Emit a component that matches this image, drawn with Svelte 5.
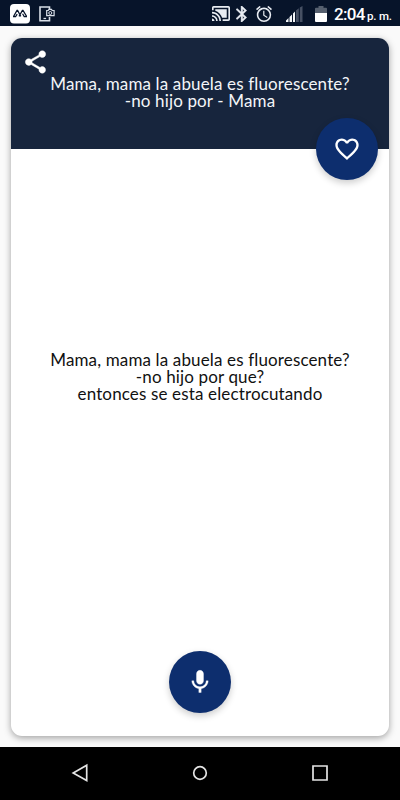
<script lang="ts">
  const title = ['Mama, mama la abuela es fluorescente?', '-no hijo por - Mama'];

  const joke = [
    'Mama, mama la abuela es fluorescente?',
    '-no hijo por que?',
    'entonces se esta electrocutando',
  ];

  let liked = $state(false);
</script>

<div class="screen">
  <header class="status-bar">
    <svg class="app-logo" width="20" height="20" viewBox="0 0 20 20">
      <rect width="20" height="19.5" rx="4" fill="#fff" />
      <path d="M3 12.6h2.6l1.6-2.4M3.6 12.4 7 6.4h.6l3.2 6M9 12.4l3.4-6h.6l3.6 6M17 12.6h-2.8l-1.6-2.8" fill="none" stroke="#07142a" stroke-width="1.2" />
    </svg>
    <svg class="capture" width="16" height="16" viewBox="0 0 16 16" fill="none" stroke="#d9dfe8">
      <path d="M10.5 3V1H1v13.8h9.5V11" stroke-width="1.6" />
      <path d="M4.5 12.5h2.6" stroke-width="1.3" />
      <path d="M7.7 4.5h1.5l.7-1.1h2.6l.7 1.1h1.9v5.2H7.7z" stroke-width="1.2" fill="#07142a" />
      <circle cx="11.3" cy="7" r="1.5" />
    </svg>

    <div class="system">
      <svg width="18" height="15" viewBox="1 3 22 18" preserveAspectRatio="none" fill="#e8ecf2">
        <path d="M1 18v3h3c0-1.66-1.34-3-3-3zm0-4v2c2.76 0 5 2.24 5 5h2c0-3.87-3.13-7-7-7zm18-7H5v1.63c3.96 1.28 7.09 4.41 8.37 8.37H19V7zM1 10v2c4.97 0 9 4.03 9 9h2c0-6.08-4.93-11-11-11zm20-7H3c-1.1 0-2 .9-2 2v3h2V5h18v14h-7v2h7c1.1 0 2-.9 2-2V5c0-1.1-.9-2-2-2z" />
      </svg>
      <svg class="bluetooth" width="11" height="16" viewBox="5 2 13 20" preserveAspectRatio="none" fill="#e8ecf2" stroke="#e8ecf2" stroke-width=".5">
        <path d="M17.71 7.71 12 2h-1v7.59L6.41 5 5 6.41 10.59 12 5 17.59 6.41 19 11 14.41V22h1l5.71-5.71-4.3-4.29 4.3-4.29zM13 5.83l1.88 1.88L13 9.59V5.83zm1.88 10.46L13 18.17v-3.76l1.88 1.88z" />
      </svg>
      <svg class="alarm" width="16" height="16" viewBox="2 2 20 20" fill="#e8ecf2">
        <path d="m22 5.72-4.6-3.86-1.29 1.53 4.6 3.86L22 5.72zM7.88 3.39 6.6 1.86 2 5.71l1.29 1.53 4.59-3.85zM12.5 8H11v6l4.75 2.85.75-1.23-4-2.37V8zM12 4c-4.97 0-9 4.03-9 9s4.02 9 9 9a9 9 0 0 0 0-18zm0 16c-3.87 0-7-3.13-7-7s3.13-7 7-7 7 3.13 7 7-3.13 7-7 7z" />
      </svg>
      <svg class="signal" width="17" height="16" viewBox="0 0 17 16">
        <path d="M0 16v-1.5L2.5 12v4zM3.5 16v-5L6 8.5V16zM7 16V7.5L9 5.5V16z" fill="#f4f6f8" />
        <path d="M10 16V4.5l2.8-2.2V16zM13.8 16V1.6L16.5 0v16z" fill="#465063" />
      </svg>
      <svg class="battery" width="12" height="16" viewBox="0 0 12 16">
        <path d="M3.5 0h5v1.7H11q1 0 1 1V7H0V2.7q0-1 1-1h2.5z" fill="#56606f" />
        <path d="M0 7h12v8q0 1-1 1H1q-1 0-1-1z" fill="#fff" />
      </svg>
      <span class="clock">2:04</span>
      <span class="period">p. m.</span>
    </div>
  </header>

  <main class="content">
    <article class="card">
      <div class="card-header">
        <button class="share" aria-label="Compartir">
          <svg width="27" height="28" viewBox="0 0 24 24" fill="#fff" stroke="#fff" stroke-width=".4">
            <path d="M18 16.08c-.76 0-1.44.3-1.96.77L8.91 12.7c.05-.23.09-.46.09-.7s-.04-.47-.09-.7l7.05-4.11c.54.5 1.25.81 2.04.81 1.66 0 3-1.34 3-3s-1.34-3-3-3-3 1.34-3 3c0 .24.04.47.09.7L8.04 9.81C7.5 9.31 6.79 9 6 9c-1.66 0-3 1.34-3 3s1.34 3 3 3c.79 0 1.5-.31 2.04-.81l7.12 4.16c-.05.21-.08.43-.08.65 0 1.61 1.31 2.92 2.92 2.92s2.92-1.31 2.92-2.92-1.31-2.92-2.92-2.92z" />
          </svg>
        </button>
        <div class="text title">
          {#each title as line}
            <p>{line}</p>
          {/each}
        </div>
        <button class="fab favorite" aria-label="Favorito" onclick={() => (liked = !liked)}>
          <svg width="28" height="28" viewBox="0 0 24 24" fill="#fff">
            {#if liked}
              <path d="m12 21.35-1.45-1.32C5.4 15.36 2 12.28 2 8.5 2 5.42 4.42 3 7.5 3c1.74 0 3.41.81 4.5 2.09C13.09 3.81 14.76 3 16.5 3 19.58 3 22 5.42 22 8.5c0 3.78-3.4 6.86-8.55 11.54L12 21.35z" />
            {:else}
              <path d="M16.5 3c-1.74 0-3.41.81-4.5 2.09C10.91 3.81 9.24 3 7.5 3 4.42 3 2 5.42 2 8.5c0 3.78 3.4 6.86 8.55 11.54L12 21.35l1.45-1.32C18.6 15.36 22 12.28 22 8.5 22 5.42 19.58 3 16.5 3zm-4.4 15.55-.1.1-.1-.1C7.14 14.24 4 11.39 4 8.5 4 6.5 5.5 5 7.5 5c1.54 0 3.04.99 3.57 2.36h1.87C13.46 5.99 14.96 5 16.5 5c2 0 3.5 1.5 3.5 3.5 0 2.89-3.14 5.74-7.9 10.05z" />
            {/if}
          </svg>
        </button>
      </div>

      <div class="text joke">
        {#each joke as line}
          <p>{line}</p>
        {/each}
      </div>

      <button class="fab mic" aria-label="Escuchar">
        <svg width="28" height="28" viewBox="0 0 24 24" fill="#fff" stroke="#fff" stroke-width=".3">
          <path d="M12 14c1.66 0 2.99-1.34 2.99-3L15 5c0-1.66-1.34-3-3-3S9 3.34 9 5v6c0 1.66 1.34 3 3 3zm5.3-3c0 3-2.54 5.1-5.3 5.1S6.7 14 6.7 11H5c0 3.41 2.72 6.23 6 6.72V21h2v-3.28c3.28-.48 6-3.3 6-6.72h-1.7z" />
        </svg>
      </button>
    </article>
  </main>

  <nav class="nav-bar">
    <svg width="18" height="20" viewBox="0 0 18 20"><path d="M15.7 2.2v15.4L2.2 9.9z" /></svg>
    <svg width="18" height="20" viewBox="0 0 18 20"><circle cx="9" cy="10" r="6.3" /></svg>
    <svg width="18" height="20" viewBox="0 0 18 20"><path d="M2 3h14v14H2z" /></svg>
  </nav>
</div>

<style>
  :global(body) {
    margin: 0;
  }

  .screen {
    width: 400px;
    height: 800px;
    display: flex;
    flex-direction: column;
    background: #fafafa;
    overflow: hidden;
  }

  svg {
    display: block;
    flex-shrink: 0;
  }

  button {
    padding: 0;
    border: none;
    background: none;
    cursor: pointer;
  }

  .status-bar {
    box-sizing: border-box;
    height: 26px;
    flex-shrink: 0;
    display: flex;
    align-items: center;
    padding: 1px 9px 0 10px;
    background: #07142a;
  }

  .capture {
    margin-left: 9px;
  }

  .system {
    display: flex;
    align-items: center;
    margin-left: 157px;
    color: #fff;
    font-family: Roboto, sans-serif;
    white-space: nowrap;
  }

  .bluetooth {
    margin-left: 6px;
  }

  .alarm {
    margin-left: 9px;
  }

  .signal {
    margin-left: 14px;
  }

  .battery {
    margin-left: 12px;
  }

  .clock {
    width: 33px;
    margin-left: 7px;
    font-size: 17px;
    font-weight: 500;
    line-height: 20px;
    letter-spacing: -0.7px;
  }

  .period {
    padding-top: 4px;
    font-size: 11.5px;
    font-weight: 500;
    line-height: 16px;
    letter-spacing: -0.2px;
  }

  .content {
    flex: 1;
    display: flex;
    padding: 12px 11px 11px;
  }

  .card {
    flex: 1;
    display: flex;
    flex-direction: column;
    align-items: center;
    border-radius: 11px;
    background: #fff;
    box-shadow: 0 2px 7px rgba(0, 0, 0, 0.36);
  }

  .card-header {
    position: relative;
    box-sizing: border-box;
    width: 100%;
    height: 111px;
    padding-top: 37px;
    border-radius: 11px 11px 0 0;
    background: #17253d;
  }

  .share {
    position: absolute;
    left: 11px;
    top: 10px;
  }

  .text {
    font-family: Lato, sans-serif;
    font-size: 17px;
    line-height: 17px;
    letter-spacing: 0.14px;
    text-align: center;
    white-space: nowrap;
  }

  .text p {
    margin: 0;
  }

  .title {
    color: #f3f5f8;
  }

  .joke {
    flex: 1;
    padding-top: 202px;
    color: #111;
  }

  .fab {
    width: 62px;
    height: 62px;
    display: flex;
    align-items: center;
    justify-content: center;
    border-radius: 50%;
    background: #0d2e6e;
    box-shadow: 0 3px 7px rgba(0, 0, 0, 0.2);
  }

  .favorite {
    position: absolute;
    right: 11px;
    bottom: -31px;
  }

  .mic {
    margin-bottom: 23px;
  }

  .nav-bar {
    box-sizing: border-box;
    height: 53px;
    flex-shrink: 0;
    display: flex;
    justify-content: space-between;
    padding: 16px 71px 0;
    background: #000;
  }

  .nav-bar svg {
    fill: none;
    stroke: #e4e4e4;
    stroke-width: 1.7;
  }
</style>
